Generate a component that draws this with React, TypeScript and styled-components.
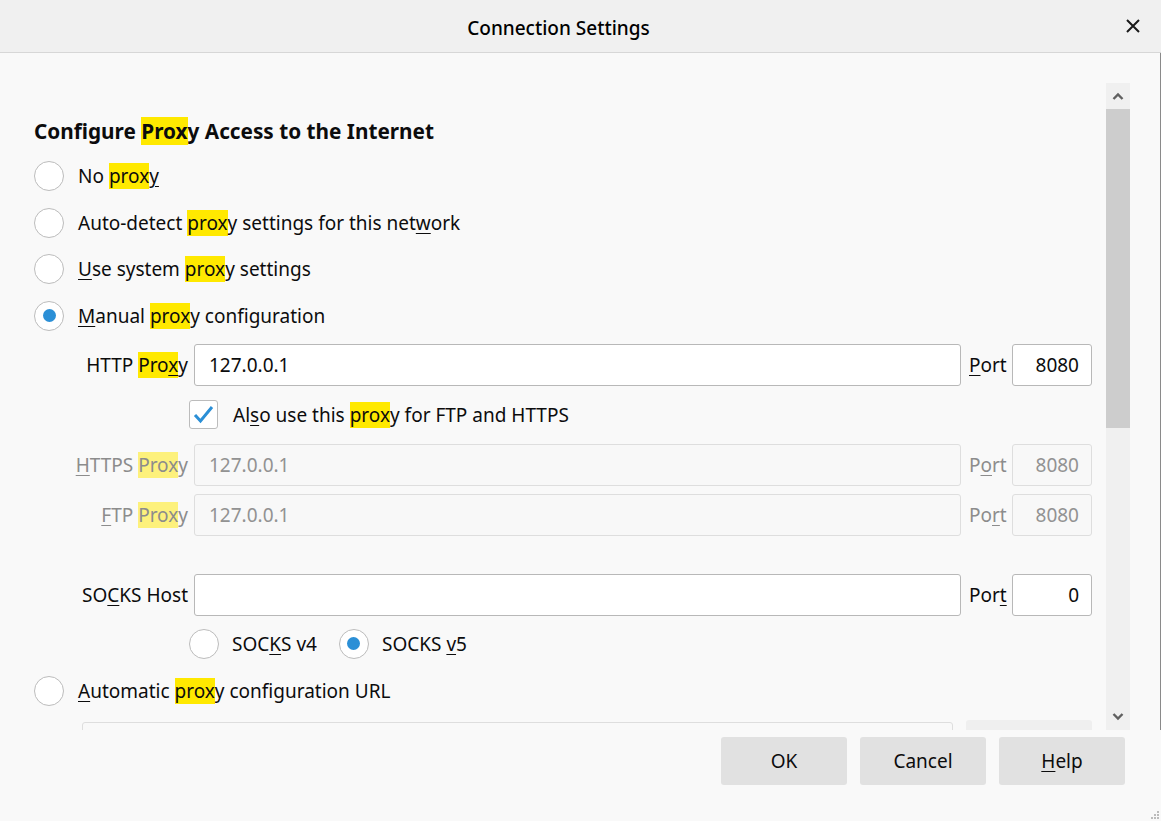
import styled, { createGlobalStyle } from 'styled-components';

const GlobalStyle = createGlobalStyle`
  html, body {
    margin: 0;
    padding: 0;
    background: #f9f9f9;
  }
  body {
    font-family: "Noto Sans", "Open Sans", sans-serif;
    color: #0c0c0d;
  }
  * {
    box-sizing: border-box;
  }
`;

const Dialog = styled.div`
    width: 1161px;
    height: 821px;
    display: flex;
    flex-direction: column;
    background: #f9f9f9;
    position: relative;
    overflow: hidden;
`;

const TitleBar = styled.header`
    height: 53px;
    flex-shrink: 0;
    display: flex;
    align-items: center;
    justify-content: center;
    position: relative;
    background: #f0f0f0;
    border-bottom: 1px solid #d7d7d7;
    font-size: 19px;
    font-weight: 500;
    color: #000;
    padding: 3px 44px 0 0;
`;

const CloseButton = styled.button`
    position: absolute;
    right: 16px;
    top: 14px;
    width: 24px;
    height: 24px;
    padding: 0;
    border: none;
    background: transparent;
    display: flex;
    align-items: center;
    justify-content: center;
`;

const Main = styled.div`
    display: flex;
    gap: 14px;
    padding: 30px 30px 0 34px;
    height: 677px;
    flex-shrink: 0;
    border-right: 1px solid #8a8a8a;
`;

const Content = styled.div`
    flex: 1;
    overflow: hidden;
    padding-top: 34px;
    font-size: 19px;
`;

const Heading = styled.h2`
    margin: 0 0 8px;
    font-size: 20.75px;
    font-weight: 700;
    line-height: 28px;
`;

const Mark = styled.span<{ $faded?: boolean }>`
    background: ${p => (p.$faded ? '#fdf17c' : '#ffe900')};
`;

const Key = styled.span`
    text-decoration: underline;
    text-underline-offset: 3px;
`;

const RadioRow = styled.label<{ $indent?: number }>`
    height: 46.5px;
    display: flex;
    align-items: center;
    gap: 14px;
    padding-left: ${p => p.$indent ?? 0}px;
`;

const RadioCircle = styled.span<{ $checked?: boolean }>`
    width: 30px;
    height: 30px;
    flex-shrink: 0;
    border-radius: 50%;
    border: 1px solid #bcbcbc;
    background: #fff;
    display: flex;
    align-items: center;
    justify-content: center;

    &::after {
        content: '';
        width: 13px;
        height: 13px;
        border-radius: 50%;
        background: ${p => (p.$checked ? '#2b8fd6' : 'transparent')};
    }
`;

const ProxyGrid = styled.div`
    display: grid;
    grid-template-columns: 160px 1fr 51px 80px;
    grid-auto-rows: 42px;
    row-gap: 8px;
    align-items: center;
    margin-top: 4.5px;
`;

const FieldLabel = styled.span<{ $disabled?: boolean }>`
    text-align: right;
    padding-right: 6px;
    color: ${p => (p.$disabled ? '#8c8c8c' : '#0c0c0d')};
    white-space: nowrap;
`;

const PortLabel = styled.span<{ $disabled?: boolean }>`
    padding-left: 8px;
    color: ${p => (p.$disabled ? '#8c8c8c' : '#0c0c0d')};
`;

const TextField = styled.div<{ $disabled?: boolean; $port?: boolean }>`
    height: 42px;
    display: flex;
    align-items: center;
    justify-content: ${p => (p.$port ? 'flex-end' : 'flex-start')};
    padding: ${p => (p.$port ? '0 12px' : '0 14px')};
    border: 1px solid ${p => (p.$disabled ? '#dedede' : '#b8b8b8')};
    border-radius: 3px;
    background: ${p => (p.$disabled ? '#f8f8f8' : '#fff')};
    color: ${p => (p.$disabled ? '#929292' : '#0c0c0d')};
`;

const CheckRow = styled.label`
    grid-column: 1 / -1;
    display: flex;
    align-items: center;
    gap: 15px;
    padding-left: 155px;
`;

const CheckBox = styled.span`
    width: 29px;
    height: 29px;
    border: 1px solid #bcbcbc;
    border-radius: 3px;
    background: #fff;
    display: flex;
    align-items: center;
    justify-content: center;
`;

const SocksGrid = styled(ProxyGrid)`
    margin-top: 38px;
`;

const SocksVersions = styled.div`
    display: flex;
    align-items: center;
    gap: 22px;
    height: 42px;
    margin-top: 7px;
    padding-left: 155px;

    ${RadioRow} {
        gap: 13px;
    }
`;

const AutoRow = styled(RadioRow)`
    margin-top: 3px;
`;

const UrlRow = styled.div`
    display: flex;
    gap: 13px;
    align-items: flex-start;
    margin-top: 6px;
    padding-left: 48px;
`;

const UrlField = styled.div`
    width: 871px;
    height: 42px;
    margin-top: 2px;
    border: 1px solid #dedede;
    border-radius: 3px;
    background: #f9f9f9;
`;

const ReloadButton = styled.div`
    width: 126px;
    height: 44px;
    border-radius: 3px;
    background: #efefef;
`;

const Scrollbar = styled.div`
    width: 24px;
    display: flex;
    flex-direction: column;
    background: #f0f0f0;
`;

const ScrollArrow = styled.div`
    height: 26px;
    flex-shrink: 0;
    display: flex;
    align-items: center;
    justify-content: center;
`;

const Thumb = styled.div`
    height: 319px;
    background: #cdcdcd;
`;

const Track = styled.div`
    flex: 1;
`;

const Footer = styled.footer`
    display: flex;
    justify-content: flex-end;
    gap: 13px;
    padding: 7px 36px 0 0;
`;

const DialogButton = styled.button`
    width: 126px;
    height: 48px;
    border: none;
    border-radius: 3px;
    background: #e1e1e1;
    font-family: inherit;
    font-size: 19px;
    color: #0c0c0d;
`;

const Grip = styled.svg`
    position: absolute;
    right: 1px;
    bottom: 1px;
`;

const Chevron = ({ up }: { up?: boolean }) => (
    <svg width="12" height="8" viewBox="0 0 12 8">
        <path
            d={up ? 'M1.5 7 L6 2.5 L10.5 7' : 'M1.5 1 L6 5.5 L10.5 1'}
            fill="none"
            stroke="#606060"
            strokeWidth="2.4"
        />
    </svg>
);

const Radio = ({ checked, children, indent }: { checked?: boolean; children: React.ReactNode; indent?: number }) => (
    <RadioRow $indent={indent}>
        <RadioCircle $checked={checked} />
        <span>{children}</span>
    </RadioRow>
);

const App = () => {
    return (
        <Dialog>
            <GlobalStyle />
            <TitleBar>
                Connection Settings
                <CloseButton aria-label="Close">
                    <svg width="16" height="16" viewBox="0 0 16 16">
                        <path d="M2 2 L14 14 M14 2 L2 14" stroke="#1a1a1a" strokeWidth="2" />
                    </svg>
                </CloseButton>
            </TitleBar>
            <Main>
                <Content>
                    <Heading>
                        Configure <Mark>Prox</Mark>y Access to the Internet
                    </Heading>
                    <Radio>
                        No <Mark>prox</Mark><Key>y</Key>
                    </Radio>
                    <Radio>
                        Auto-detect <Mark>prox</Mark>y settings for this net<Key>w</Key>ork
                    </Radio>
                    <Radio>
                        <Key>U</Key>se system <Mark>prox</Mark>y settings
                    </Radio>
                    <Radio checked>
                        <Key>M</Key>anual <Mark>prox</Mark>y configuration
                    </Radio>

                    <ProxyGrid>
                        <FieldLabel>
                            HTTP <Mark>Pro<Key>x</Key></Mark>y
                        </FieldLabel>
                        <TextField>127.0.0.1</TextField>
                        <PortLabel><Key>P</Key>ort</PortLabel>
                        <TextField $port>8080</TextField>

                        <CheckRow>
                            <CheckBox>
                                <svg width="21" height="19" viewBox="0 0 21 19">
                                    <path d="M2 10 L7.5 16 L19 2" fill="none" stroke="#2b8fd6" strokeWidth="3" />
                                </svg>
                            </CheckBox>
                            <span>
                                Al<Key>s</Key>o use this <Mark>prox</Mark>y for FTP and HTTPS
                            </span>
                        </CheckRow>

                        <FieldLabel $disabled>
                            <Key>H</Key>TTPS <Mark $faded>Prox</Mark>y
                        </FieldLabel>
                        <TextField $disabled>127.0.0.1</TextField>
                        <PortLabel $disabled>P<Key>o</Key>rt</PortLabel>
                        <TextField $disabled $port>8080</TextField>

                        <FieldLabel $disabled>
                            <Key>F</Key>TP <Mark $faded>Prox</Mark>y
                        </FieldLabel>
                        <TextField $disabled>127.0.0.1</TextField>
                        <PortLabel $disabled>Po<Key>r</Key>t</PortLabel>
                        <TextField $disabled $port>8080</TextField>
                    </ProxyGrid>

                    <SocksGrid>
                        <FieldLabel>
                            SO<Key>C</Key>KS Host
                        </FieldLabel>
                        <TextField />
                        <PortLabel>Por<Key>t</Key></PortLabel>
                        <TextField $port>0</TextField>
                    </SocksGrid>

                    <SocksVersions>
                        <Radio>
                            SOC<Key>K</Key>S v4
                        </Radio>
                        <Radio checked>
                            SOCKS <Key>v</Key>5
                        </Radio>
                    </SocksVersions>

                    <AutoRow>
                        <RadioCircle />
                        <span>
                            <Key>A</Key>utomatic <Mark>prox</Mark>y configuration URL
                        </span>
                    </AutoRow>

                    <UrlRow>
                        <UrlField />
                        <ReloadButton />
                    </UrlRow>
                </Content>
                <Scrollbar>
                    <ScrollArrow>
                        <Chevron up />
                    </ScrollArrow>
                    <Thumb />
                    <Track />
                    <ScrollArrow>
                        <Chevron />
                    </ScrollArrow>
                </Scrollbar>
            </Main>
            <Footer>
                <DialogButton>OK</DialogButton>
                <DialogButton>Cancel</DialogButton>
                <DialogButton>
                    <Key>H</Key>elp
                </DialogButton>
            </Footer>
            <Grip width="10" height="10" viewBox="0 0 10 10">
                <rect x="7" y="1" width="2" height="2" fill="#bcbcbc" />
                <rect x="4" y="4" width="2" height="2" fill="#bcbcbc" />
                <rect x="7" y="4" width="2" height="2" fill="#bcbcbc" />
                <rect x="1" y="7" width="2" height="2" fill="#bcbcbc" />
                <rect x="4" y="7" width="2" height="2" fill="#bcbcbc" />
                <rect x="7" y="7" width="2" height="2" fill="#bcbcbc" />
            </Grip>
        </Dialog>
    );
};

export default App;
